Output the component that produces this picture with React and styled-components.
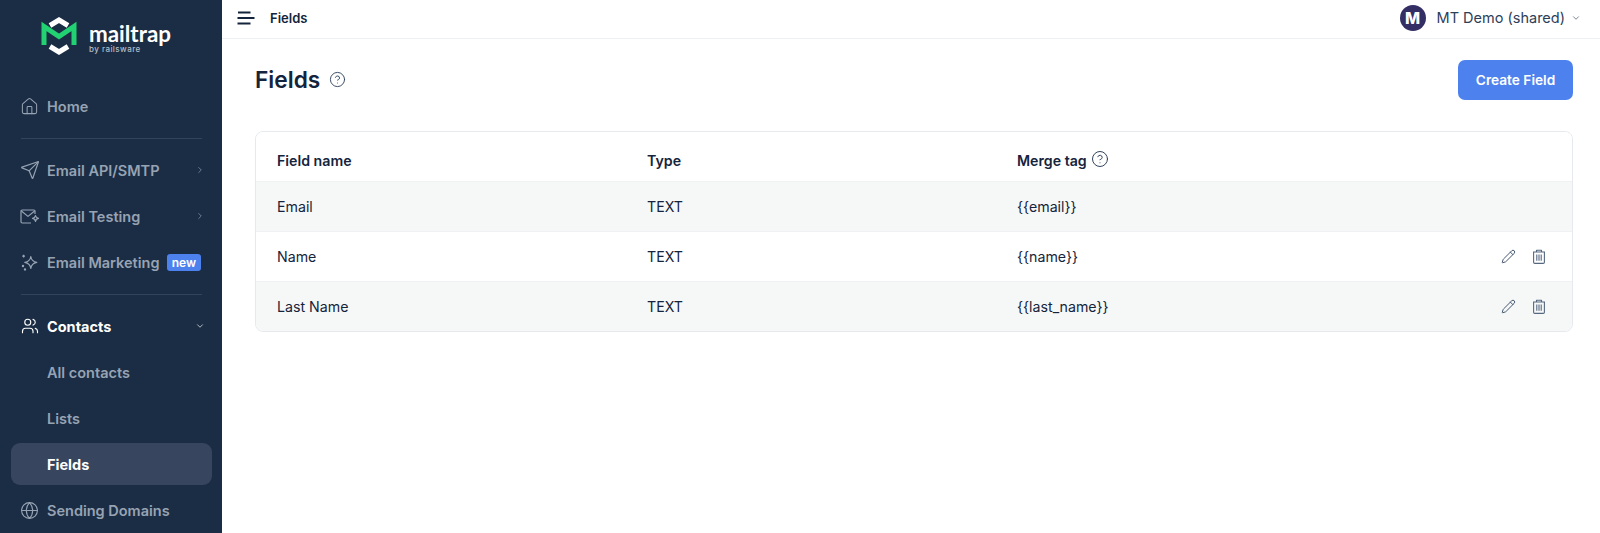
import React from "react";
import styled, { createGlobalStyle } from "styled-components";
import {
  House,
  Send,
  Users,
  Globe,
  ChevronRight,
  ChevronDown,
  CircleHelp,
  Pencil,
} from "lucide-react";

const GlobalStyle = createGlobalStyle`
  html, body { margin: 0; padding: 0; height: 100%; }
  body { font-family: "Inter", "Liberation Sans", sans-serif; background: #fff; overflow: hidden; }
  * { box-sizing: border-box; }
`;

const Page = styled.div`
  display: flex;
  width: 1600px;
  height: 533px;
  overflow: hidden;
`;

const Sidebar = styled.aside`
  width: 222px;
  flex-shrink: 0;
  height: 533px;
  background: #1b2d44;
  display: flex;
  flex-direction: column;
  overflow: hidden;
`;

const LogoWrap = styled.div`
  height: 83px;
  flex-shrink: 0;
  display: flex;
  align-items: flex-start;
  padding: 16px 0 0 41px;
  gap: 12px;
`;

const LogoText = styled.div`
  display: flex;
  flex-direction: column;
  padding-top: 7px;
`;

const LogoName = styled.span`
  font-family: "Lato", sans-serif;
  font-size: 22.4px;
  line-height: 21px;
  font-weight: 700;
  color: #fff;
`;

const LogoBy = styled.span`
  font-size: 8px;
  line-height: 9px;
  font-weight: 500;
  letter-spacing: 0.45px;
  color: #b4bdc9;
  margin-top: 1px;
`;

const NavRow = styled.div`
  height: 46px;
  flex-shrink: 0;
  display: flex;
  align-items: center;
  padding: 0 21px;
  gap: 9px;
  font-size: 14.5px;
  font-weight: ${(p) => (p.$on ? 700 : 600)};
  color: ${(p) => (p.$on ? "#ffffff" : "#97a3b3")};
`;

const NavIcon = styled.span`
  width: 17px;
  height: 18px;
  display: flex;
  align-items: center;
  justify-content: center;
  flex-shrink: 0;
  color: ${(p) => (p.$on ? "#ffffff" : "#97a3b3")};

  svg {
    flex-shrink: 0;
  }
`;

const NavLabel = styled.span`
  flex: 1;
  white-space: nowrap;
`;

const Caret = styled.span`
  display: flex;
  margin-right: -4px;
`;

const NewBadge = styled.span`
  background: #4d82ee;
  color: #fff;
  font-size: 12px;
  font-weight: 600;
  line-height: 17px;
  padding: 0 5px;
  border-radius: 3px;
  margin-left: -4px;
`;

const Divider = styled.div`
  height: 1px;
  flex-shrink: 0;
  margin: 9px 20px 8px 21px;
  background: #32445c;
`;

const SubRow = styled.div`
  height: 46px;
  flex-shrink: 0;
  padding: 2px 10px 2px 11px;
`;

const SubInner = styled.div`
  height: 42px;
  display: flex;
  align-items: center;
  padding-left: 36px;
  border-radius: 9px;
  font-size: 14.5px;
  font-weight: ${(p) => (p.$on ? 700 : 600)};
  color: ${(p) => (p.$on ? "#ffffff" : "#97a3b3")};
  background: ${(p) => (p.$on ? "#37465e" : "transparent")};
`;

const Main = styled.main`
  flex: 1;
  min-width: 0;
  display: flex;
  flex-direction: column;
`;

const TopBar = styled.header`
  height: 39px;
  flex-shrink: 0;
  display: flex;
  align-items: center;
  padding: 0 19px 3px 15px;
  border-bottom: 1px solid #eff1f4;
`;

const Crumb = styled.span`
  margin-left: 15px;
  font-size: 13px;
  font-weight: 600;
  color: #14243c;
`;

const Account = styled.div`
  margin-left: auto;
  display: flex;
  align-items: center;
  color: #2d4059;
  font-size: 14.5px;
`;

const Avatar = styled.span`
  width: 26px;
  height: 26px;
  border-radius: 50%;
  background: #332e63;
  color: #fff;
  font-size: 16px;
  font-weight: 800;
  display: flex;
  align-items: center;
  justify-content: center;
  margin-right: 11px;
`;

const AccountCaret = styled.span`
  display: flex;
  margin-left: 6px;
`;

const Content = styled.div`
  padding: 21px 27px 0 33px;
`;

const TitleRow = styled.div`
  height: 40px;
  display: flex;
  align-items: center;
  justify-content: space-between;
`;

const TitleGroup = styled.div`
  display: flex;
  align-items: center;
  gap: 9px;
  padding-bottom: 2px;
`;

const Title = styled.h1`
  margin: 0;
  font-size: 22.7px;
  font-weight: 600;
  color: #14243c;
`;

const CreateButton = styled.button`
  width: 115px;
  height: 40px;
  border: none;
  border-radius: 7px;
  background: #4d82ee;
  color: #fff;
  font-family: inherit;
  font-size: 13.7px;
  font-weight: 600;
`;

const Table = styled.div`
  margin-top: 31px;
  border: 1px solid #e6e9ee;
  border-radius: 8px;
  overflow: hidden;
`;

const Row = styled.div`
  display: grid;
  grid-template-columns: 370px 370px 1fr 71px;
  align-items: center;
  height: ${(p) => (p.$last ? "49px" : "50px")};
  padding-left: 21px;
  padding-top: ${(p) => (p.$head ? "8px" : "0")};
  font-size: 14.2px;
  font-weight: ${(p) => (p.$head ? 600 : 400)};
  color: #14243c;
  background: ${(p) => (p.$alt ? "#f6f8f8" : "#fff")};
  border-bottom: ${(p) => (p.$last ? "none" : "1px solid #eff1f3")};
`;

const TagHead = styled.span`
  display: flex;
  align-items: center;
  gap: 4px;

  svg {
    margin-top: -4px;
  }
`;

const Actions = styled.span`
  display: flex;
  align-items: center;
  gap: 16px;
  color: #465872;
`;

const Hamburger = () => (
  <svg width="18" height="14" viewBox="0 0 18 14" fill="none" stroke="#14243c" strokeWidth="1.8">
    <path d="M1 1.5h12.5M0.5 7h17M0.5 12.5h13" />
  </svg>
);

const LogoMark = () => (
  <svg width="36" height="40" viewBox="0 0 36 40" fill="none">
    <path d="M9 9.5 18 4l9 5.5" stroke="#fff" strokeWidth="5" />
    <path d="M9 30.5 18 36l9-5.5" stroke="#fff" strokeWidth="5" />
    <path d="M3 29V10.5l15 10 15-10V29" stroke="#22d172" strokeWidth="5" />
  </svg>
);

const MailSpark = () => (
  <svg width="20" height="15" viewBox="0 0 20 15" fill="none" stroke="#97a3b3" strokeWidth="1.2" strokeLinejoin="round">
    <path d="M11 14H2.2A1.2 1.2 0 0 1 1 12.8V2.2A1.2 1.2 0 0 1 2.2 1h11.6A1.2 1.2 0 0 1 15 2.2V5" />
    <path d="M1.4 2 8 7.4 14.6 2" />
    <path d="M15.5 6.5c.3 1.8 1 2.5 3 2.8-2 .3-2.7 1-3 3-.3-2-1-2.7-3-3 2-.3 2.7-1 3-2.8Z" />
  </svg>
);

const StarDots = () => (
  <svg width="17" height="17" viewBox="0 0 17 17" fill="none" stroke="#97a3b3" strokeWidth="1.2" strokeLinejoin="round">
    <path d="M9.8 2.5c.5 3.6 2 5.2 6 5.9-4 .7-5.5 2.4-6 6.1-.5-3.7-2-5.4-6-6.1 4-.7 5.5-2.3 6-5.9Z" />
    <path d="M2.6.8v2.8M1.2 2.2H4" />
    <circle cx="2" cy="12" r="0.6" />
    <circle cx="4" cy="15.4" r="0.6" />
  </svg>
);

const Trash = () => (
  <svg width="14" height="15" viewBox="0 0 14 15" fill="none" stroke="#566880" strokeWidth="1.1" strokeLinejoin="round">
    <path d="M1 3h12M4.5 2.6V1.2h5v1.4" />
    <path d="M1.6 3v10.2c0 .7.5 1.2 1.2 1.2h8.4c.7 0 1.2-.5 1.2-1.2V3" />
    <path d="M4.8 5.6v6.2M7 5.6v6.2M9.2 5.6v6.2" />
  </svg>
);

const fields = [
  { name: "Email", tag: "{{email}}", alt: true },
  { name: "Name", tag: "{{name}}", edit: true },
  { name: "Last Name", tag: "{{last_name}}", alt: true, edit: true, last: true },
];

const App = () => (
  <Page>
    <GlobalStyle />
    <Sidebar>
      <LogoWrap>
        <LogoMark />
        <LogoText>
          <LogoName>mailtrap</LogoName>
          <LogoBy>by railsware</LogoBy>
        </LogoText>
      </LogoWrap>
      <NavRow>
        <NavIcon><House size={19} strokeWidth={1.3} /></NavIcon>
        <NavLabel>Home</NavLabel>
      </NavRow>
      <Divider />
      <NavRow>
        <NavIcon><Send size={20} strokeWidth={1.4} /></NavIcon>
        <NavLabel>Email API/SMTP</NavLabel>
        <Caret><ChevronRight size={10} strokeWidth={1.6} /></Caret>
      </NavRow>
      <NavRow>
        <NavIcon><MailSpark /></NavIcon>
        <NavLabel>Email Testing</NavLabel>
        <Caret><ChevronRight size={10} strokeWidth={1.6} /></Caret>
      </NavRow>
      <NavRow>
        <NavIcon><StarDots /></NavIcon>
        <NavLabel>Email Marketing</NavLabel>
        <NewBadge>new</NewBadge>
      </NavRow>
      <Divider />
      <NavRow $on>
        <NavIcon $on><Users size={18} strokeWidth={1.5} /></NavIcon>
        <NavLabel>Contacts</NavLabel>
        <Caret><ChevronDown size={10} strokeWidth={1.6} /></Caret>
      </NavRow>
      <SubRow><SubInner>All contacts</SubInner></SubRow>
      <SubRow><SubInner>Lists</SubInner></SubRow>
      <SubRow><SubInner $on>Fields</SubInner></SubRow>
      <NavRow>
        <NavIcon><Globe size={19} strokeWidth={1.4} /></NavIcon>
        <NavLabel>Sending Domains</NavLabel>
      </NavRow>
    </Sidebar>
    <Main>
      <TopBar>
        <Hamburger />
        <Crumb>Fields</Crumb>
        <Account>
          <Avatar>M</Avatar>
          MT Demo (shared)
          <AccountCaret><ChevronDown size={10} strokeWidth={1.5} /></AccountCaret>
        </Account>
      </TopBar>
      <Content>
        <TitleRow>
          <TitleGroup>
            <Title>Fields</Title>
            <CircleHelp size={17} strokeWidth={1.3} color="#2d4059" />
          </TitleGroup>
          <CreateButton>Create Field</CreateButton>
        </TitleRow>
        <Table>
          <Row $head>
            <span>Field name</span>
            <span>Type</span>
            <TagHead>
              Merge tag
              <CircleHelp size={18} strokeWidth={1.3} color="#2d4059" />
            </TagHead>
          </Row>
          {fields.map((f) => (
            <Row key={f.name} $alt={f.alt} $last={f.last}>
              <span>{f.name}</span>
              <span>TEXT</span>
              <span>{f.tag}</span>
              {f.edit && (
                <Actions>
                  <Pencil size={15} strokeWidth={1.6} />
                  <Trash />
                </Actions>
              )}
            </Row>
          ))}
        </Table>
      </Content>
    </Main>
  </Page>
);

export default App;
